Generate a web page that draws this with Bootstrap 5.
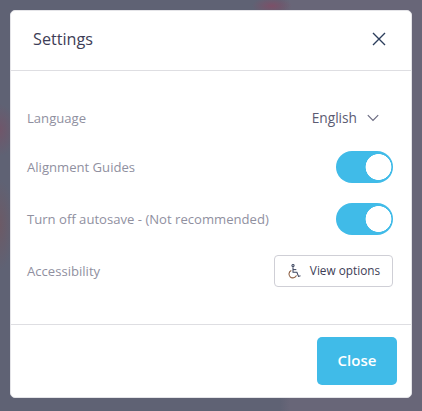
<!DOCTYPE html>
<html lang="en">
<head>
<meta charset="utf-8">
<title>Settings</title>
<link href="https://cdn.jsdelivr.net/npm/bootstrap@5.3.0/dist/css/bootstrap.min.css" rel="stylesheet">
<style>
html, body { height: 100%; }
body {
  margin: 0; overflow: hidden;
  font-family: "Open Sans", "Noto Sans", sans-serif;
  background-color: #686678;
  background-image:
    radial-gradient(ellipse 16px 26px at 0 130px, #70566a, transparent),
    radial-gradient(ellipse 14px 45px at 0 225px, #6c5a66, transparent),
    radial-gradient(ellipse 20px 9px at 272px 6px, #7c5068, transparent),
    linear-gradient(90deg, #5f6274, #5f6274 280px, #686678 290px);
}
.sheet {
  width: 402px; height: 388px; margin: 10px;
  border: 1px solid #e4e4e8; border-radius: 5px;
  background: #fff; display: flex; flex-direction: column;
}
.sheet-head {
  height: 60px; padding: 0 25px 0 22px; border-bottom: 1px solid #dedee2;
}
.sheet-title { font-size: 16.2px; font-weight: 500; color: #3d3d56; margin: 0 0 2px; }
.x-btn { background: none; border: 0; padding: 0 0 3px; line-height: 0; }
.sheet-body { flex: 1 1 auto; padding: 31px 18px 0 16px; }
.opt-row { height: 32px; margin-bottom: 20px; }
.opt-row-first { margin-bottom: 17px; }
.opt-label { font-size: 13.1px; color: #90909f; padding-top: 2px; }
.lang { font-size: 13.7px; color: #5b5b72; margin-right: 14px; padding-top: 1px; }
.lang svg { margin-left: 10px; }
.sw { padding: 0; margin: 0; min-height: 0; line-height: 0; }
.form-switch .sw-input {
  width: 57px; height: 32px; margin: 0; float: none; border: 0; border-radius: 16px;
  background-color: #40bbe8;
  background-image: radial-gradient(circle at 42.5px 16px, #fff 12.6px, transparent 13.2px);
  background-position: 0 0; box-shadow: none;
}
.view-btn {
  width: 119px; height: 32px; padding: 0; border: 1px solid #cfcfd6; border-radius: 4px;
  background: #fff; font-size: 11.8px; font-weight: 500; color: #3d3d56;
}
.sheet-foot { height: 73px; padding: 12px 14px 0 0; border-top: 1px solid #dedee2; }
.close-btn {
  width: 80px; height: 48px; padding: 0 0 2px; border: 0; border-radius: 5px;
  background: #40bbe8; color: #fff; font-size: 15px; font-weight: 600;
}
</style>
</head>
<body>
<div class="sheet" role="dialog">
  <div class="sheet-head d-flex align-items-center justify-content-between">
    <h5 class="sheet-title">Settings</h5>
    <button type="button" class="x-btn" aria-label="Close">
      <svg width="14" height="14" viewBox="0 0 14 14"><path d="M1 1 13 13M13 1 1 13" stroke="#2c3e5c" stroke-width="1.4" fill="none"/></svg>
    </button>
  </div>
  <div class="sheet-body">
    <div class="opt-row opt-row-first d-flex align-items-center justify-content-between">
      <span class="opt-label">Language</span>
      <span class="lang d-flex align-items-center">English
        <svg width="12" height="8" viewBox="0 0 12 8"><path d="M.8 1.2 6 6.4 11.2 1.2" stroke="#6a6a80" stroke-width="1.2" fill="none"/></svg>
      </span>
    </div>
    <div class="opt-row d-flex align-items-center justify-content-between">
      <span class="opt-label">Alignment Guides</span>
      <div class="form-check form-switch sw"><input class="form-check-input sw-input" type="checkbox" checked aria-label="Alignment Guides"></div>
    </div>
    <div class="opt-row d-flex align-items-center justify-content-between">
      <span class="opt-label">Turn off autosave - (Not recommended)</span>
      <div class="form-check form-switch sw"><input class="form-check-input sw-input" type="checkbox" checked aria-label="Turn off autosave"></div>
    </div>
    <div class="opt-row d-flex align-items-center justify-content-between">
      <span class="opt-label">Accessibility</span>
      <button type="button" class="btn view-btn d-flex align-items-center justify-content-center gap-2">
        <svg width="15" height="15" viewBox="0 0 14 15" fill="none" stroke="#3d4660" stroke-width="1.05"><circle cx="5.5" cy="1.6" r="1.1"/><path d="M5.5 3.2V8.2H9.4L11 12.4 13 11.8"/><path d="M5.5 5.6H8.8"/><path d="M3.8 6.4A3.9 3.9 0 1 0 9 11.4" stroke="#8a5a3c"/></svg>
        View options
      </button>
    </div>
  </div>
  <div class="sheet-foot d-flex justify-content-end align-items-start">
    <button type="button" class="btn close-btn">Close</button>
  </div>
</div>
<script src="https://cdn.jsdelivr.net/npm/bootstrap@5.3.0/dist/js/bootstrap.bundle.min.js"></script>
</body>
</html>
